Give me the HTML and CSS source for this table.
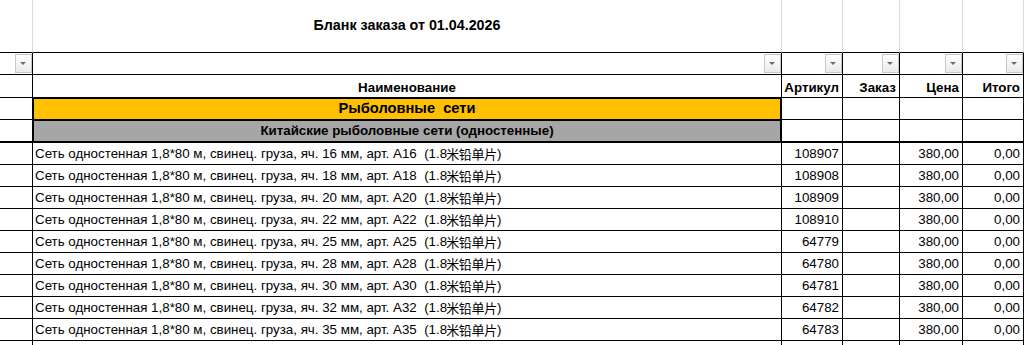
FILE: index.html
```
<!DOCTYPE html>
<html lang="ru">
<head>
<meta charset="utf-8">
<title>Бланк заказа</title>
<link rel="stylesheet" href="styles.css">
</head>
<body>
<div class="sheet">
  <div class="row title-row">
    <div class="cell"></div>
    <div class="cell title">Бланк заказа от 01.04.2026</div>
    <div class="cell"></div>
    <div class="cell"></div>
    <div class="cell"></div>
    <div class="cell"></div>
  </div>
  <div class="row filter-row">
    <div class="cell"><span class="dd"></span></div>
    <div class="cell"><span class="dd"></span></div>
    <div class="cell"><span class="dd"></span></div>
    <div class="cell"><span class="dd"></span></div>
    <div class="cell"><span class="dd"></span></div>
    <div class="cell"><span class="dd"></span></div>
  </div>
  <div class="row head-row">
    <div class="cell"></div>
    <div class="cell center">Наименование</div>
    <div class="cell num">Артикул</div>
    <div class="cell num">Заказ</div>
    <div class="cell num">Цена</div>
    <div class="cell num">Итого</div>
  </div>
  <div class="row group-row">
    <div class="cell"></div>
    <div class="cell center group">Рыболовные  сети</div>
    <div class="cell"></div>
    <div class="cell"></div>
    <div class="cell"></div>
    <div class="cell"></div>
  </div>
  <div class="row sub-row">
    <div class="cell"></div>
    <div class="cell center sub">Китайские рыболовные сети (одностенные)</div>
    <div class="cell"></div>
    <div class="cell"></div>
    <div class="cell"></div>
    <div class="cell"></div>
  </div>
  <div class="row data-row">
    <div class="cell"></div>
    <div class="cell">Сеть одностенная 1,8*80 м, свинец. груза, яч. 16 мм, арт. А16  (1.8<span class="cjk">米铅单片</span>)</div>
    <div class="cell num">108907</div>
    <div class="cell num"></div>
    <div class="cell num">380,00</div>
    <div class="cell num">0,00</div>
  </div>
  <div class="row data-row">
    <div class="cell"></div>
    <div class="cell">Сеть одностенная 1,8*80 м, свинец. груза, яч. 18 мм, арт. А18  (1.8<span class="cjk">米铅单片</span>)</div>
    <div class="cell num">108908</div>
    <div class="cell num"></div>
    <div class="cell num">380,00</div>
    <div class="cell num">0,00</div>
  </div>
  <div class="row data-row">
    <div class="cell"></div>
    <div class="cell">Сеть одностенная 1,8*80 м, свинец. груза, яч. 20 мм, арт. А20  (1.8<span class="cjk">米铅单片</span>)</div>
    <div class="cell num">108909</div>
    <div class="cell num"></div>
    <div class="cell num">380,00</div>
    <div class="cell num">0,00</div>
  </div>
  <div class="row data-row">
    <div class="cell"></div>
    <div class="cell">Сеть одностенная 1,8*80 м, свинец. груза, яч. 22 мм, арт. А22  (1.8<span class="cjk">米铅单片</span>)</div>
    <div class="cell num">108910</div>
    <div class="cell num"></div>
    <div class="cell num">380,00</div>
    <div class="cell num">0,00</div>
  </div>
  <div class="row data-row">
    <div class="cell"></div>
    <div class="cell">Сеть одностенная 1,8*80 м, свинец. груза, яч. 25 мм, арт. А25  (1.8<span class="cjk">米铅单片</span>)</div>
    <div class="cell num">64779</div>
    <div class="cell num"></div>
    <div class="cell num">380,00</div>
    <div class="cell num">0,00</div>
  </div>
  <div class="row data-row">
    <div class="cell"></div>
    <div class="cell">Сеть одностенная 1,8*80 м, свинец. груза, яч. 28 мм, арт. А28  (1.8<span class="cjk">米铅单片</span>)</div>
    <div class="cell num">64780</div>
    <div class="cell num"></div>
    <div class="cell num">380,00</div>
    <div class="cell num">0,00</div>
  </div>
  <div class="row data-row">
    <div class="cell"></div>
    <div class="cell">Сеть одностенная 1,8*80 м, свинец. груза, яч. 30 мм, арт. А30  (1.8<span class="cjk">米铅单片</span>)</div>
    <div class="cell num">64781</div>
    <div class="cell num"></div>
    <div class="cell num">380,00</div>
    <div class="cell num">0,00</div>
  </div>
  <div class="row data-row">
    <div class="cell"></div>
    <div class="cell">Сеть одностенная 1,8*80 м, свинец. груза, яч. 32 мм, арт. А32  (1.8<span class="cjk">米铅单片</span>)</div>
    <div class="cell num">64782</div>
    <div class="cell num"></div>
    <div class="cell num">380,00</div>
    <div class="cell num">0,00</div>
  </div>
  <div class="row data-row">
    <div class="cell"></div>
    <div class="cell">Сеть одностенная 1,8*80 м, свинец. груза, яч. 35 мм, арт. А35  (1.8<span class="cjk">米铅单片</span>)</div>
    <div class="cell num">64783</div>
    <div class="cell num"></div>
    <div class="cell num">380,00</div>
    <div class="cell num">0,00</div>
  </div>
  <div class="row data-row">
    <div class="cell"></div>
    <div class="cell"></div>
    <div class="cell num"></div>
    <div class="cell num"></div>
    <div class="cell num"></div>
    <div class="cell num"></div>
  </div>
</div>
</body>
</html>
```
FILE: styles.css
```
html, body {
  margin: 0;
  padding: 0;
  background: #fff;
  overflow: hidden;
}

.sheet {
  width: 1024px;
  font-family: "Liberation Sans", Arial, "Noto Sans CJK SC", sans-serif;
  font-size: 13.33px;
  color: #000;
}

.row {
  display: grid;
  grid-template-columns: 33px 749px 61px 57px 63px 61px;
  height: 22px;
}

.cell {
  box-sizing: border-box;
  border-right: 1px solid #000;
  border-bottom: 1px solid #000;
  padding: 0 2px;
  display: flex;
  align-items: center;
  white-space: pre;
  overflow: hidden;
  line-height: 15px;
}

.num {
  justify-content: flex-end;
  padding-right: 3px;
}

.center {
  justify-content: center;
}

.cjk {
  font-family: "Noto Sans CJK SC", sans-serif;
  font-size: 13px;
  letter-spacing: -0.3px;
  margin-left: -1px;
}

/* title row */
.title-row {
  height: 53px;
}

.title-row .cell {
  border-right-color: #d9d9d9;
}

.title {
  justify-content: center;
  font-weight: bold;
  font-size: 14.3px;
  padding-bottom: 2px;
}

/* filter row */
.filter-row .cell {
  justify-content: flex-end;
  align-items: flex-start;
  padding: 1px 0 0 0;
}

.dd {
  position: relative;
  display: block;
  width: 17px;
  height: 19px;
  box-sizing: border-box;
  border: 1px solid #c8c8c8;
  background: linear-gradient(#ffffff, #ebebeb);
}

.dd::after {
  content: "";
  position: absolute;
  left: 4px;
  top: 7px;
  border-left: 3px solid transparent;
  border-right: 3px solid transparent;
  border-top: 3px solid #6b6b6b;
}

/* header row */
.head-row {
  height: 23px;
}

.head-row .cell {
  font-weight: bold;
  align-items: flex-end;
  padding-bottom: 2px;
}

/* group rows */
.group {
  background: #ffc000;
  font-weight: bold;
  font-size: 14.67px;
  padding-bottom: 1px;
  box-shadow: inset 1px 1px 0 #000, inset -1px 0 0 #000;
}

.sub-row {
  height: 23px;
}

.sub-row .cell {
  border-bottom-width: 2px;
}

.sub {
  background: #a6a6a6;
  font-weight: bold;
  box-shadow: inset 1px 1px 0 #000, inset -1px 0 0 #000;
}
```
